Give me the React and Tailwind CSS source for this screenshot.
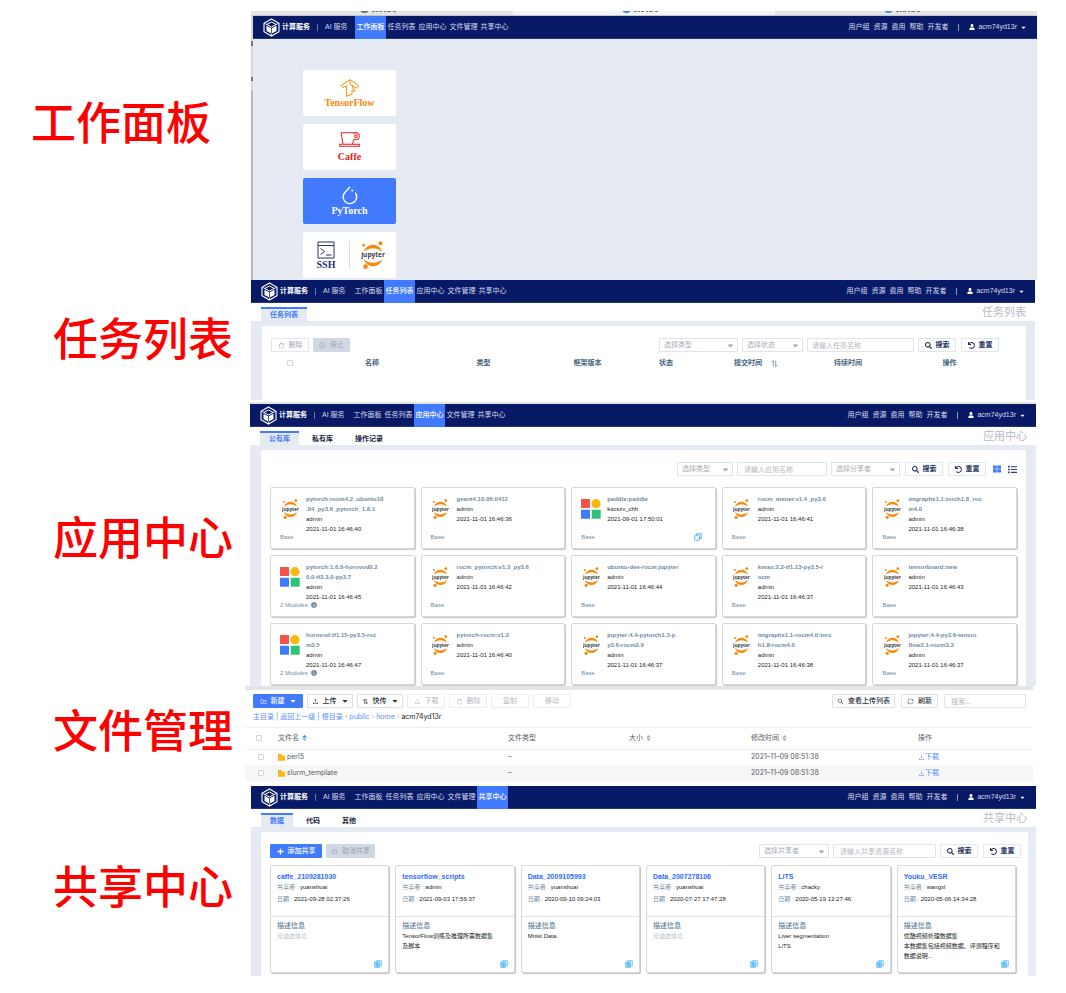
import React from "react";
import { FaUser, FaCaretDown, FaSearch, FaUndo, FaThLarge, FaList, FaInfoCircle, FaPlus } from "react-icons/fa";
import {
  AiOutlineDelete,
  AiOutlineDownload,
  AiOutlineUpload,
  AiOutlineFolderAdd,
  AiOutlineSearch,
  AiOutlineSync,
  AiOutlinePlayCircle,
  AiOutlineInbox,
} from "react-icons/ai";

const NAV = ["工作面板", "任务列表", "应用中心", "文件管理", "共享中心"];
const LINKS = ["用户组", "资源", "费用", "帮助", "开发者"];

function CubeLogo() {
  return (
    <svg viewBox="0 0 34 38" className="h-[19px] w-[17px]" fill="none" stroke="#fff" aria-hidden="true">
      <path d="M17 2 32 10.500V27.500L17 36 2 27.500V10.500Z" strokeWidth="2.200" />
      <path d="M2 10.500 8 13M32 10.500 26 13M17 36V31" strokeWidth="1.500" />
      <path d="M17 8 26.500 13 17 18 7.500 13Z" strokeWidth="2" />
      <path d="M7 15.500 16.300 20.500V31L7 26Z" fill="#fff" stroke="none" />
      <path d="M27 15.500 17.700 20.500V31L27 26Z" fill="#fff" stroke="none" />
    </svg>
  );
}

function Jupyter({ className }) {
  return (
    <svg viewBox="0 0 50 60" className={className} aria-label="jupyter">
      <path d="M5 23C12 3 38 3 45 23C34 13 16 13 5 23Z" fill="#f58a0b" />
      <path d="M5 39C12 59 38 59 45 39C34 49 16 49 5 39Z" fill="#f58a0b" />
      <circle cx="41" cy="5" r="4.200" fill="#f58a0b" />
      <circle cx="5" cy="9" r="3" fill="#f58a0b" />
      <circle cx="9" cy="55" r="5" fill="#f58a0b" />
      <text x="25" y="35" textAnchor="middle" fontSize="14" fontWeight="700" fontFamily="Open Sans, sans-serif" fill="#3d3d42">
        jupyter
      </text>
    </svg>
  );
}

function Blocks() {
  return (
    <svg viewBox="0 0 20 20" className="size-5" aria-hidden="true">
      <rect width="9" height="9" rx=".6" fill="#f6524a" />
      <circle cx="15" cy="4.700" r="4.600" fill="#fab80c" />
      <rect y="10.700" width="9" height="9" rx=".6" fill="#3f7bff" />
      <rect x="10.700" y="10.700" width="9" height="9" rx=".6" fill="#2fc475" />
    </svg>
  );
}

function CopyIcon() {
  return (
    <svg viewBox="0 0 16 16" className="size-2" fill="none" stroke="#35aef5" strokeWidth="1.800" aria-hidden="true">
      <path d="M5 4V1.500h9.500V11H12" />
      <rect x="1.500" y="4.500" width="9.500" height="10" rx="1.500" />
    </svg>
  );
}

function ShareIcon() {
  return (
    <svg viewBox="0 0 16 16" className="size-2" fill="none" stroke="#3fb4f6" strokeWidth="1.300" aria-hidden="true">
      <path d="M5 3V1.200h9.800V12H12" />
      <rect x="1.200" y="3.500" width="10.500" height="11.300" rx="1" fill="#a5dcfb" />
      <path d="M3.500 7h6M3.500 9.500h6M3.500 12h6M6.500 5v8" />
    </svg>
  );
}

function TransferIcon({ className }) {
  return (
    <svg viewBox="0 0 14 14" className={className} fill="none" stroke="currentColor" strokeWidth="1.300" aria-hidden="true">
      <path d="M5.500 12V2L2.500 5.500M8.500 2V12L11.500 8.500" />
    </svg>
  );
}

function Sorter({ active }) {
  return (
    <svg viewBox="0 0 8 10" className="h-[6px] w-[5px]" aria-hidden="true">
      <path d="M4 0 8 4H0Z" fill={active ? "#1684fc" : "#a2a8b3"} />
      <path d="M4 10 0 6H8Z" fill="#a2a8b3" />
    </svg>
  );
}

function TopNav({ active }) {
  return (
    <header className="flex h-[23px] items-stretch border-b border-[#26357a] bg-[#081a66] pr-[10px] pl-[10px] text-[7px] text-[#d5dbf0]">
      <div className="flex items-center gap-[2px] text-white">
        <CubeLogo />
        <span className="font-bold">计算服务</span>
      </div>
      <span className="mx-[7px] h-[7px] w-px self-center bg-[#6a76ad]" />
      <div className="flex w-[30px] items-center whitespace-nowrap">AI 服务</div>
      <nav className="flex">
        {NAV.map((item) => (
          <a
            key={item}
            href="#"
            aria-current={item === active ? "page" : undefined}
            className={
              "flex min-w-[31px] items-center justify-center px-px whitespace-nowrap " +
              (item === active ? "-mb-px bg-[#427aff] font-medium text-white" : "")
            }
          >
            {item}
          </a>
        ))}
      </nav>
      <div className="ml-auto flex items-center gap-[4px]">
        {LINKS.map((item) => (
          <a key={item} href="#">
            {item}
          </a>
        ))}
        <span className="mx-[6px] h-[7px] w-px bg-[#8d97c4]" />
        <button type="button" className="flex items-center gap-[3px]">
          <FaUser className="size-[6px] text-white" />
          <span>acm74yd13r</span>
          <FaCaretDown className="size-[7px] text-white" />
        </button>
      </div>
    </header>
  );
}

function TabBar({ tabs, title }) {
  return (
    <div className="flex h-[18px] items-end justify-between pr-[9px] pl-[10px]">
      <div className="flex items-end gap-[4px]" role="tablist">
        {tabs.map((t, i) => (
          <button
            key={t}
            type="button"
            role="tab"
            aria-selected={i === 0}
            className={
              "h-[14px] border-t-2 px-[9px] text-[7px] leading-[12px] font-bold " +
              (i === 0 ? "border-[#427aff] bg-[#e6eaf2] text-[#427aff]" : "border-transparent text-[#20263d]")
            }
          >
            {t}
          </button>
        ))}
      </div>
      <h2 className="self-center text-[11px] leading-[16px] text-[#b6bac8]">{title}</h2>
    </div>
  );
}

const BTN = "flex h-[14px] items-center justify-center gap-[4px] rounded-[1px] border whitespace-nowrap text-[7px] ";

function Btn({ icon: Icon, children, className }) {
  return (
    <button type="button" className={BTN + className}>
      {Icon && <Icon className="size-[7px]" />}
      {children}
    </button>
  );
}

function SearchButtons() {
  return (
    <div className="flex gap-[5px]">
      <Btn icon={FaSearch} className="w-[38px] border-[#dfe5f2] bg-white font-bold text-[#22305f]">
        搜索
      </Btn>
      <Btn icon={FaUndo} className="w-[38px] border-[#dfe5f2] bg-white font-bold text-[#22305f]">
        重置
      </Btn>
    </div>
  );
}

function Select({ label, className }) {
  return (
    <div className={"grid items-center " + className}>
      <select
        aria-label={label}
        className="col-start-1 row-start-1 h-[14px] w-full appearance-none rounded-[1px] border border-[#dfe3f0] bg-white px-[4px] text-[7px] leading-[12px] text-[#a9adb6]"
      >
        <option>{label}</option>
      </select>
      <FaCaretDown className="pointer-events-none col-start-1 row-start-1 mr-[3px] size-[9px] justify-self-end text-[#a0a4ac]" />
    </div>
  );
}

function Field({ label, className }) {
  return (
    <input
      type="text"
      aria-label={label}
      placeholder={label}
      className={"h-[14px] rounded-[1px] border border-[#dfe3f0] bg-white text-[7px] placeholder:text-[#b4b7be] " + className}
    />
  );
}

function Check({ label }) {
  return (
    <input
      type="checkbox"
      aria-label={label}
      className="block size-[6px] appearance-none rounded-[1px] border border-[#cfd3da] bg-white"
    />
  );
}

function Row({ label, labelClass, children, className = "" }) {
  return (
    <section className={"flex " + className}>
      <h1 className={"shrink-0 text-[45px] leading-[48px] font-medium whitespace-nowrap text-[#ff0000] " + labelClass}>{label}</h1>
      {children}
    </section>
  );
}

function BrowserTab({ className, accent }) {
  return (
    <span className={"flex justify-center " + className}>
      <svg viewBox="0 0 44 4" className="h-[4px] w-[44px]" aria-hidden="true">
        <path d="M1 0H8V1Q4.500 3 1 1Z" fill={accent} />
        <path d="M12 0h3v1h-3zM16 0h2v1h-2zM19 0h3v1h-3zM24 0h2v1h-2zM27 0h4v1h-4zM33 0h3v1h-3z" fill="#77797c" />
      </svg>
    </span>
  );
}

function Dashboard() {
  const tile = "flex h-[46px] w-[93px] flex-col items-center justify-center rounded-[2px] font-['Liberation_Serif'] text-[10px] leading-[11px] font-bold ";
  return (
    <div className="mr-[29px] min-w-0 flex-1">
      <div className="grid h-[5px] grid-cols-3 overflow-hidden border-b border-[#c5c8c8]">
        <BrowserTab className="bg-[#e4e6e6]" accent="#6d6f7c" />
        <BrowserTab className="bg-[#f4f6f6]" accent="#4a7fd0" />
        <BrowserTab className="bg-[#e4e6e6]" accent="#5a7de8" />
      </div>
      <div className="flex h-[264px]">
        <div className="flex w-[2px] flex-col bg-[#b6b8bd]">
          <span className="h-[25px] bg-[#d5d7da]" />
          <span className="h-[5px] bg-[#777]" />
          <span className="h-[31px] bg-[#d5d7da]" />
          <span className="h-[4px] bg-[#777]" />
          <span className="h-[10px] bg-[#d5d7da]" />
        </div>
        <div className="min-w-0 flex-1 bg-[#e6eaf2]">
          <TopNav active="工作面板" />
          <div className="flex flex-col gap-[8px] pt-[31px] pl-[50px]">
            <a href="#" className={tile + "bg-white text-[#f58a0b]"}>
              <svg viewBox="0 0 58 54" className="h-[18px] w-5" fill="none" stroke="currentColor" strokeWidth="3" strokeLinejoin="round" aria-hidden="true">
                <path d="M29 2 56 20 48 27 36 20V27L43 31V37L35 33V46L19 52V20L8 26 2 20Z" />
                <path d="M29 2V15L36 20" />
              </svg>
              TensorFlow
            </a>
            <a href="#" className={tile + "bg-white text-[#e02020]"}>
              <svg viewBox="0 0 62 44" className="h-[15px] w-[21px]" fill="none" stroke="currentColor" strokeWidth="3" aria-hidden="true">
                <path d="M44 2H6L12 36M40 36 43 22M1 36H60V42H2V36" />
                <path d="M42 4C50 -1 61 3 60 13S50 25 43 20" />
                <circle cx="50" cy="12" r="4" />
              </svg>
              <span className="pt-1">Caffe</span>
            </a>
            <a href="#" className={tile + "bg-[#427aff] text-white"}>
              <svg viewBox="0 0 32 38" className="h-[19px] w-4" fill="none" stroke="currentColor" strokeWidth="2.800" aria-hidden="true">
                <path d="M16 2 6.500 12A13.500 13.500 0 1 0 26.500 13.500" />
                <circle cx="20.500" cy="9" r="1.800" fill="currentColor" stroke="none" />
              </svg>
              PyTorch
            </a>
            <div className="flex h-[46px] w-[93px] items-center rounded-[2px] bg-white">
              <a href="#" className="flex flex-1 flex-col items-center font-['Liberation_Serif'] text-[10px] leading-[11px] font-bold text-[#29356d]">
                <svg viewBox="0 0 36 36" className="size-[18px]" fill="none" stroke="currentColor" strokeWidth="2" aria-hidden="true">
                  <path d="M2 2H34V34H2ZM2 9H34M7 15 15 21 7 27M18 28H29" />
                </svg>
                SSH
              </a>
              <span className="h-7 w-px bg-[#dcdcdc]" />
              <a href="#" className="flex flex-1 justify-center">
                <Jupyter className="h-7 w-6" />
              </a>
            </div>
          </div>
        </div>
      </div>
    </div>
  );
}

function Tasks() {
  return (
    <div className="mr-[31px] min-w-0 flex-1">
      <TopNav active="任务列表" />
      <TabBar tabs={["任务列表"]} title="任务列表" />
      <div className="h-[79px] bg-[#e6eaf2] pt-[5px] pr-[9px] pl-[11px]">
        <div className="h-full rounded-t-[2px] bg-white pt-[12px] pl-[9px]">
          <div className="flex gap-[4px] pr-[27px]">
            <Btn icon={AiOutlineDelete} className="w-[38px] border-[#e2e6f0] text-[#a3a7b0]">
              删除
            </Btn>
            <Btn icon={AiOutlinePlayCircle} className="w-[37px] border-[#d0d9e3] bg-[#d0d9e3] text-[#9aa5b1]">
              停止
            </Btn>
            <Select label="选择类型" className="ml-auto w-[79px]" />
            <Select label="选择状态" className="w-[61px]" />
            <Field label="请输入任务名称" className="w-[107px] px-[4px]" />
            <SearchButtons />
          </div>
          <table className="w-full table-fixed text-[7px] text-[#45637b]">
            <thead>
              <tr className="h-[22px]">
                <th className="w-[38px]">
                  <div className="flex justify-center">
                    <Check label="全选任务" />
                  </div>
                </th>
                <th className="w-[126px]">名称</th>
                <th className="w-[97px]">类型</th>
                <th className="w-[111px]">框架版本</th>
                <th className="w-[46px]">状态</th>
                <th className="w-[134px]">
                  <span className="flex items-center justify-center gap-[9px]">
                    提交时间
                    <svg viewBox="0 0 12 12" className="size-[7px]" fill="none" stroke="#7c92a5" strokeWidth="1.500" aria-hidden="true">
                      <path d="M4 11V1L1 4M8 1V11L11 8" />
                    </svg>
                  </span>
                </th>
                <th className="w-[50px]">持续时间</th>
                <th>操作</th>
              </tr>
            </thead>
          </table>
        </div>
      </div>
    </div>
  );
}

const APPS = [
  { name: ["pytorch:rocm4.2_ubuntu18", ".04_py3.6_pytorch_1.8.1"], time: "2021-11-01 16:46:40" },
  { name: ["geant4.10.06:0412"], time: "2021-11-01 16:46:36" },
  { name: ["paddle:paddle"], owner: "kscszx_chh", time: "2021-09-01 17:50:01", blocks: true, copy: true },
  { name: ["rocm_mxnet:v1.4_py3.6"], time: "2021-11-01 16:46:41" },
  { name: ["migraphx1.1:torch1.8_roc", "m4.0"], time: "2021-11-01 16:46:38" },
  { name: ["pytorch:1.6.0-horovod0.2", "0.0-tf2.3.0-py3.7"], time: "2021-11-01 16:46:45", blocks: true, modules: true },
  { name: ["rocm_pytorch:v1.3_py3.6"], time: "2021-11-01 16:46:42" },
  { name: ["ubuntu-dev-rocm:jupyter"], time: "2021-11-01 16:46:44" },
  { name: ["keras:2.2-tf1.13-py3.5-r", "ocm"], time: "2021-11-01 16:46:37" },
  { name: ["tensorboard:new"], time: "2021-11-01 16:46:43" },
  { name: ["horovod:tf1.15-py3.5-roc", "m3.5"], time: "2021-11-01 16:46:47", blocks: true, modules: true },
  { name: ["pytorch-rocm:v1.3"], time: "2021-11-01 16:46:40" },
  { name: ["jupyter:4.4-pytorch1.3-p", "y3.6-rocm2.9"], time: "2021-11-01 16:46:37" },
  { name: ["migraphx1.1-rocm4.0:torc", "h1.8-rocm4.0"], time: "2021-11-01 16:46:38" },
  { name: ["jupyter:4.4-py3.6-tensro", "flow2.1-rocm3.3"], time: "2021-11-01 16:46:37" },
];

const CARD = "rounded-[2px] border border-[#d6d8da] bg-white shadow-[1px_1px_1px_#c4c4c4] ";

function AppCard({ app }) {
  return (
    <article className={CARD + "flex h-[62px] flex-col px-[9px] pt-[6px] pb-[6px]"}>
      <div className="flex min-h-0 flex-1 gap-[6px]">
        <div className="flex w-5 shrink-0 justify-center pt-[5px]">
          {app.blocks ? <Blocks /> : <Jupyter className="h-5 w-[17px]" />}
        </div>
        <div className="min-w-0 text-[6px] leading-[10px] whitespace-nowrap text-[#1c1c1c]">
          <h3 className="font-bold text-[#6f8ba3]">
            {app.name.map((line) => (
              <span key={line} className="block">
                {line}
              </span>
            ))}
          </h3>
          <p>{app.owner || "admin"}</p>
          <p>{app.time}</p>
        </div>
      </div>
      <div className="flex h-[10px] items-center justify-between pr-[4px] text-[6px] leading-[10px] text-[#6f8ba3]">
        <span className="flex items-center gap-[3px]">
          {app.modules ? "2 Modules" : "Base"}
          {app.modules && <FaInfoCircle className="size-[6px]" />}
        </span>
        {app.copy && <CopyIcon />}
      </div>
    </article>
  );
}

function AppCenter() {
  return (
    <div className="mr-[30px] min-w-0 flex-1">
      <TopNav active="应用中心" />
      <TabBar tabs={["公有库", "私有库", "操作记录"]} title="应用中心" />
      <div className="h-[241px] bg-[#e6eaf2] pt-[5px] pr-[10px] pl-[11px]">
        <div className="h-full rounded-t-[2px] bg-white px-[9px] pt-[12px]">
          <div className="flex items-center justify-end gap-[4px]">
            <Select label="选择类型" className="w-[56px]" />
            <Field label="请输入应用名称" className="w-[90px] px-[6px]" />
            <Select label="选择分享者" className="mr-px w-[69px]" />
            <SearchButtons />
            <button type="button" aria-label="网格视图" className="mr-[3px] ml-[3px]">
              <FaThLarge className="size-2 text-[#427aff]" />
            </button>
            <button type="button" aria-label="列表视图">
              <FaList className="size-[9px] text-[#2a3a72]" />
            </button>
          </div>
          <div className="grid grid-cols-5 gap-[6px] pt-[11px]">
            {APPS.map((app) => (
              <AppCard key={app.name[0]} app={app} />
            ))}
          </div>
        </div>
      </div>
    </div>
  );
}

function Files() {
  const enabled = "border-[#dcdfe8] bg-white font-medium text-[#2b2f3a] ";
  const disabled = "border-[#eceef4] bg-white text-[#b5b8c0] ";
  return (
    <div className="mr-[33px] min-w-0 flex-1 border-t-[4px] border-[#e5e5e5] font-['Inter','Noto_Sans_CJK_SC',sans-serif]">
      <div className="flex gap-[4px] pt-[4px] pr-[7px] pl-[8px]">
        <Btn icon={AiOutlineFolderAdd} className="w-[50px] border-[#427aff] bg-[#427aff] font-medium text-white">
          新建
          <FaCaretDown className="size-[8px]" />
        </Btn>
        <Btn icon={AiOutlineUpload} className={enabled + "w-[46px]"}>
          上传
          <FaCaretDown className="size-[8px]" />
        </Btn>
        <Btn icon={TransferIcon} className={enabled + "w-[46px]"}>
          快传
          <FaCaretDown className="size-[8px]" />
        </Btn>
        <Btn icon={AiOutlineDownload} className={disabled + "w-[38px]"}>下载</Btn>
        <Btn icon={AiOutlineDelete} className={disabled + "w-[38px]"}>删除</Btn>
        <Btn className={disabled + "w-[38px]"}>复制</Btn>
        <Btn className={disabled + "w-[38px]"}>移动</Btn>
        <Btn icon={AiOutlineSearch} className={enabled + "ml-auto w-[63px]"}>查看上传列表</Btn>
        <Btn icon={AiOutlineSync} className={enabled + "mx-[2px] w-[37px]"}>刷新</Btn>
        <Field label="搜索..." className="w-[82px] px-[6px]" />
      </div>
      <nav className="flex h-5 items-center gap-[2px] border-b border-[#eeeff1] pl-[8px] text-[7px] text-[#5a8dff]">
        <a href="#">主目录</a>
        <span>|</span>
        <a href="#">返回上一级</a>
        <span>|</span>
        <a href="#">根目录</a>
        <span className="text-[#b5b8c0]">›</span>
        <a href="#">public</a>
        <span className="text-[#b5b8c0]">›</span>
        <a href="#">home</a>
        <span className="text-[#b5b8c0]">›</span>
        <span className="text-[#222]">acm74yd13r</span>
      </nav>
      <table className="w-full table-fixed text-left text-[7px] leading-[10px] text-[#55585f]">
        <thead>
          <tr className="h-[21px] border-b border-[#f0f1f3] text-[#5c6068]">
            <th className="w-[33px] pl-[11px]">
              <Check label="全选文件" />
            </th>
            <th className="w-[230px] font-normal">
              <span className="flex items-center gap-[3px]">
                文件名 <Sorter active />
              </span>
            </th>
            <th className="w-[121px] font-normal">文件类型</th>
            <th className="w-[122px] font-normal">
              <span className="flex items-center gap-[3px]">
                大小 <Sorter />
              </span>
            </th>
            <th className="w-[167px] font-normal">
              <span className="flex items-center gap-[3px]">
                修改时间 <Sorter />
              </span>
            </th>
            <th className="font-normal">操作</th>
          </tr>
        </thead>
        <tbody>
          {["perl5", "slurm_template"].map((name) => (
            <tr key={name} className="h-4 even:bg-[#f6f6f6]">
              <td className="pl-[13px]">
                <Check label={name} />
              </td>
              <td>
                <span className="flex items-center gap-[2px]">
                  <svg viewBox="0 0 14 13" className="h-[7px] w-[7px]" aria-hidden="true">
                    <path d="M0 0H6L8 3H14V13H0Z" fill="#fcb813" />
                    <path d="M0 0H6L7 2H0Z" fill="#f5913d" />
                  </svg>
                  {name}
                </span>
              </td>
              <td>–</td>
              <td />
              <td>2021–11–09 08:51:38</td>
              <td>
                <a href="#" className="flex items-center text-[#5a8dff]">
                  <AiOutlineDownload className="size-[7px]" />
                  下载
                </a>
              </td>
            </tr>
          ))}
        </tbody>
      </table>
    </div>
  );
}

const SHARES = [
  { name: "caffe_2109281030", owner: "yuanshuai", time: "2021-09-28 02:37:26" },
  { name: "tensorflow_scripts", owner: "admin", time: "2021-09-03 17:56:37", desc: ["TensorFlow训练及推理所需数据集", "及脚本"] },
  { name: "Data_2009105993", owner: "yuanshuai", time: "2020-09-10 09:24:03", desc: ["Mnist Data."] },
  { name: "Data_2007278106", owner: "yuanshuai", time: "2020-07-27 17:47:28" },
  { name: "LiTS", owner: "chacky", time: "2020-05-19 13:27:46", desc: ["Liver segmentation", "LiTS"] },
  { name: "Youku_VESR", owner: "wangxl", time: "2020-05-06 14:34:28", desc: ["优酷视频处理数据集", "本数据集包括视频数据、评测程序和", "数据说明..."] },
];

function ShareCard({ share }) {
  return (
    <article className={CARD + "flex h-[108px] flex-col"}>
      <div className="h-[51px] border-b border-[#dfe1e3] px-[6px] pt-[5px] text-[6px] leading-[11px] whitespace-nowrap text-[#1c1c1c]">
        <h3 className="text-[7px] leading-[11px] font-bold text-[#2f6bff]">{share.name}</h3>
        <p>
          <span className="text-[#6f8ba3]">共享者 : </span>
          {share.owner}
        </p>
        <p className="pt-px">
          <span className="text-[#6f8ba3]">日期 : </span>
          {share.time}
        </p>
      </div>
      <div className="flex flex-1 flex-col px-[6px] pt-[4px] text-[6px] leading-[10px] whitespace-nowrap text-[#1c1c1c]">
        <h4 className="text-[7px] leading-[10px] font-medium text-[#5f7f99]">描述信息</h4>
        {share.desc ? share.desc.map((d) => <p key={d}>{d}</p>) : <p className="text-[#b9c3cc]">无描述信息</p>}
      </div>
      <div className="flex justify-end pr-[6px] pb-[4px]">
        <button type="button" aria-label="复制" className="-mt-2">
          <ShareIcon />
        </button>
      </div>
    </article>
  );
}

function ShareCenter() {
  return (
    <div className="mr-[30px] min-w-0 flex-1">
      <TopNav active="共享中心" />
      <TabBar tabs={["数据", "代码", "其他"]} title="共享中心" />
      <div className="bg-[#e6eaf2] pt-[5px] pr-[8px] pl-[10px]">
        <div className="rounded-t-[2px] bg-white pt-[12px] pb-[3px] pl-[9px]">
          <div className="flex gap-[4px] pr-[7px]">
            <Btn icon={FaPlus} className="w-[52px] border-[#427aff] bg-[#427aff] font-medium text-white">
              添加共享
            </Btn>
            <Btn icon={AiOutlineInbox} className="w-[49px] border-[#d0d9e3] bg-[#d0d9e3] text-[#9aa5b1]">
              取消共享
            </Btn>
            <Select label="选择共享者" className="ml-auto w-[70px]" />
            <Field label="请输入共享资源名称" className="w-[103px] px-[6px]" />
            <SearchButtons />
          </div>
          <div className="grid grid-cols-6 gap-[6px] pt-[7px] pr-[12px]">
            {SHARES.map((s) => (
              <ShareCard key={s.name} share={s} />
            ))}
          </div>
        </div>
      </div>
    </div>
  );
}

export default function App() {
  return (
    <main className="min-h-screen bg-white pt-[11px] font-['Liberation_Sans','Noto_Sans_CJK_SC',sans-serif]">
      <Row label="工作面板" labelClass="w-[251px] pt-[90px] pl-[31px]">
        <Dashboard />
      </Row>
      <Row label="任务列表" labelClass="w-[251px] pt-[37px] pl-[53px]">
        <Tasks />
      </Row>
      <div className="mr-[30px] ml-[250px] h-[4px] border-b-2 border-[#e2e4e6]" />
      <Row label="应用中心" labelClass="w-[250px] pt-[112px] pl-[53px]">
        <AppCenter />
      </Row>
      <Row label="文件管理" labelClass="w-[245px] pt-[23px] pl-[53px]">
        <Files />
      </Row>
      <Row className="pt-[5px]" label="共享中心" labelClass="w-[251px] pt-[79px] pl-[53px]">
        <ShareCenter />
      </Row>
    </main>
  );
}
